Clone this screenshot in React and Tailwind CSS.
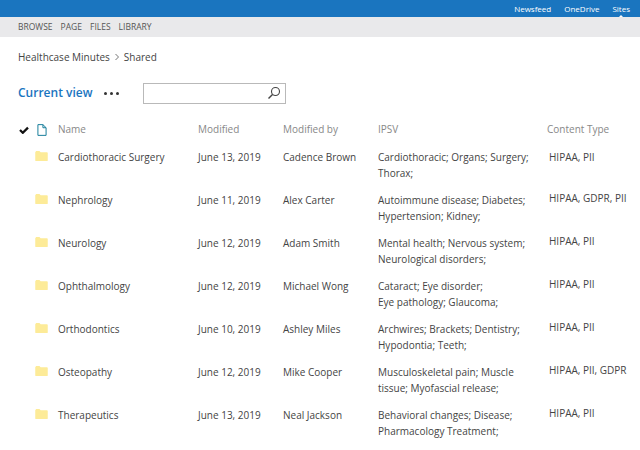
const ROWS = [
  ['Cardiothoracic Surgery', 'June 13, 2019', 'Cadence Brown', ['Cardiothoracic; Organs; Surgery;', 'Thorax;'], 'HIPAA, PII'],
  ['Nephrology', 'June 11, 2019', 'Alex Carter', ['Autoimmune disease; Diabetes;', 'Hypertension; Kidney;'], 'HIPAA, GDPR, PII'],
  ['Neurology', 'June 12, 2019', 'Adam Smith', ['Mental health; Nervous system;', 'Neurological disorders;'], 'HIPAA, PII'],
  ['Ophthalmology', 'June 12, 2019', 'Michael Wong', ['Cataract; Eye disorder;', 'Eye pathology; Glaucoma;'], 'HIPAA, PII'],
  ['Orthodontics', 'June 10, 2019', 'Ashley Miles', ['Archwires; Brackets; Dentistry;', 'Hypodontia; Teeth;'], 'HIPAA, PII'],
  ['Osteopathy', 'June 12, 2019', 'Mike Cooper', ['Musculoskeletal pain; Muscle', 'tissue; Myofascial release;'], 'HIPAA, PII, GDPR'],
  ['Therapeutics', 'June 13, 2019', 'Neal Jackson', ['Behavioral changes; Disease;', 'Pharmacology Treatment;'], 'HIPAA, PII'],
];

const COLS = 'grid grid-cols-[19px_21px_140px_85px_95px_170px_1fr]';

function Folder() {
  return (
    <svg width="13" height="10" viewBox="0 0 15 12" className="mt-[2px]">
      <path d="M0 1.5 1 0h4l1.5 1.5H14a1 1 0 0 1 1 1V11a1 1 0 0 1-1 1H1a1 1 0 0 1-1-1z" fill="#fdeb98" />
    </svg>
  );
}

export default function App() {
  return (
    <div className="w-[640px] h-[450px] overflow-hidden bg-white font-['Open_Sans',sans-serif] text-[10px] text-[#444]">
      <div className="relative h-[17px] bg-[#1a75bf] flex justify-end items-center gap-[13px] pr-[10px] text-[8px] font-medium text-white">
        <span>Newsfeed</span>
        <span>OneDrive</span>
        <span>Sites</span>
        <i className="absolute left-[619px] top-[15px] w-0 h-0 border-x-[2px] border-x-transparent border-b-[2px] border-b-white" />
      </div>
      <div className="h-[20px] bg-[#e9e9eb] flex items-center gap-[8px] pl-[18px] text-[8.5px] text-[#555]">
        <span>BROWSE</span>
        <span>PAGE</span>
        <span>FILES</span>
        <span>LIBRARY</span>
      </div>
      <div className="pl-[18px] mt-[13px] h-[14px] flex items-center gap-[4px] text-[10px] text-[#444]">
        <span>Healthcase Minutes</span>
        <svg width="6" height="8" viewBox="0 0 6 8" fill="none" stroke="#666" strokeWidth="0.9"><path d="m1.5 1 3 3-3 3" /></svg>
        <span>Shared</span>
      </div>
      <div className="pl-[18px] mt-[19px] flex items-center h-[20px]">
        <span className="w-[86px] text-[12px] font-semibold text-[#1a75bf]">Current view</span>
        <span className="w-[39px] flex gap-[3px]">
          <i className="w-[3px] h-[3px] rounded-full bg-[#333]" />
          <i className="w-[3px] h-[3px] rounded-full bg-[#333]" />
          <i className="w-[3px] h-[3px] rounded-full bg-[#333]" />
        </span>
        <div className="w-[143px] h-[21px] border border-[#b9b9b9] flex items-center justify-end pr-[4px]">
          <svg width="14" height="14" viewBox="0 0 14 14" fill="none" stroke="#444" strokeWidth="1.1">
            <circle cx="8.5" cy="5.5" r="4" />
            <path d="M5.5 8.5 1.5 12.5" strokeWidth="1.4" />
          </svg>
        </div>
      </div>
      <div className={`${COLS} pl-[18px] mt-[19px] h-[14px] items-center text-[#888]`}>
        <svg width="10" height="8" viewBox="0 0 12 10" className="ml-[1px]"><path d="M1 5l3.5 3.5L11 2" fill="none" stroke="#111" strokeWidth="2.8" /></svg>
        <svg width="10" height="12" viewBox="0 0 11 13" fill="none" stroke="#1a7f9c" strokeWidth="1.1"><path d="M1 .6h5.5L10 4v8.4H1zM6.5.6V4H10" /></svg>
        <span>Name</span>
        <span>Modified</span>
        <span>Modified by</span>
        <span>IPSV</span>
        <span className="-ml-[1px]">Content Type</span>
      </div>
      <div className="mt-[13px]">
        {ROWS.map((r, i) => (
          <div key={r[0]} className={`${COLS} pl-[18px] h-[43px] leading-[16px]`}>
            <span />
            <span className="-ml-[2px]"><Folder /></span>
            <span>{r[0]}</span>
            <span>{r[1]}</span>
            <span>{r[2]}</span>
            <span>{r[3][0]}<br />{r[3][1]}</span>
            <span className={i > 0 ? 'pl-[1px] -mt-[2px]' : 'pl-[1px]'}>{r[4]}</span>
          </div>
        ))}
      </div>
    </div>
  );
}
